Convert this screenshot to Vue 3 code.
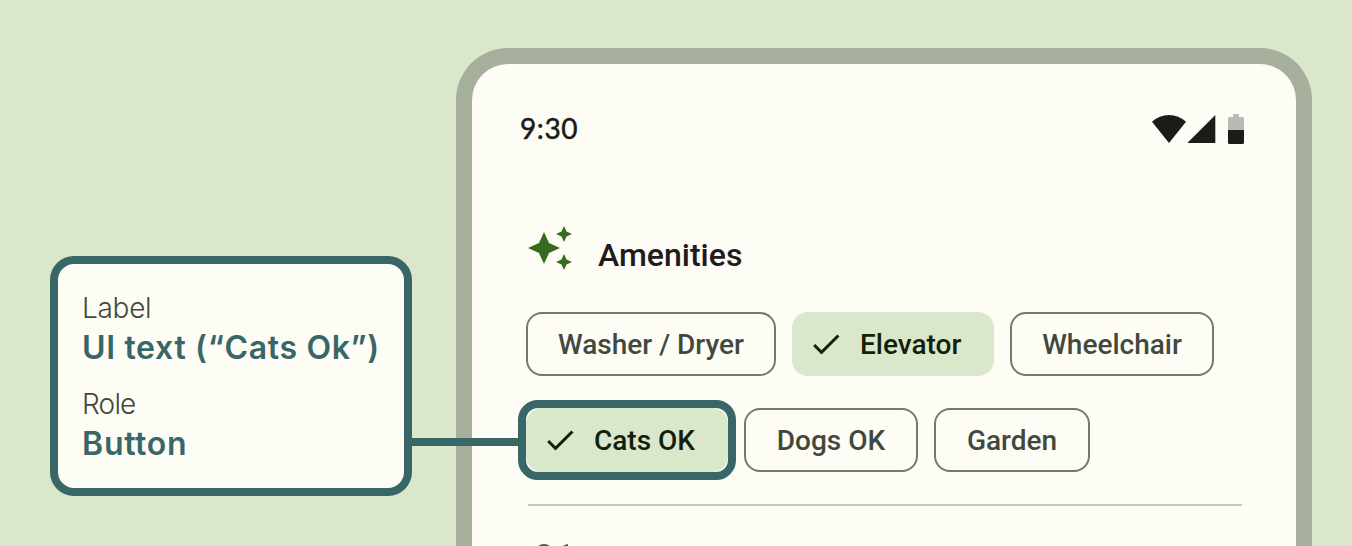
<script setup>
const rows = [
  [
    { label: 'Washer / Dryer', size: 'w250' },
    { label: 'Elevator', size: 'w202', selected: true },
    { label: 'Wheelchair', size: 'w204' },
  ],
  [
    { label: 'Cats OK', size: 'w202', selected: true, focused: true },
    { label: 'Dogs OK', size: 'w174' },
    { label: 'Garden', size: 'w156' },
  ],
]
</script>

<template>
  <main class="stage">
    <aside class="note">
      <div class="key">Label</div>
      <div class="value ui-text">UI text (“Cats Ok”)</div>
      <div class="key role">Role</div>
      <div class="value button-text">Bu<span class="joined">t</span>ton</div>
      <span class="connector"></span>
    </aside>

    <section class="phone">
      <header class="status">
        <span class="time">9:30</span>
        <svg class="status-icons" width="92" height="30" viewBox="0 0 92 30">
          <path d="M0 7.800A24.500 24.500 0 0 1 34 7.800L17 29Z" fill="#1a1c18" />
          <path d="M35.300 29H63.300V1Z" fill="#1a1c18" />
          <path d="M81 0h6v3h3.400a1.600 1.600 0 0 1 1.600 1.600V16H76V4.600A1.600 1.600 0 0 1 77.600 3H81Z" fill="#b8bab3" />
          <path d="M76 16h16v12.400a1.600 1.600 0 0 1-1.600 1.600H77.600a1.600 1.600 0 0 1-1.600-1.600Z" fill="#1a1c18" />
        </svg>
      </header>

      <div class="heading">
        <svg width="48" height="48" viewBox="0 0 24 24" fill="#386a20">
          <path d="m19 9 1.250-2.750L23 5l-2.750-1.250L19 1l-1.250 2.750L15 5l2.750 1.250zm0 6-1.250 2.750L15 19l2.750 1.250L19 23l1.250-2.750L23 19l-2.750-1.250zm-7.500-5.500L9 4 6.500 9.500 1 12l5.500 2.500L9 20l2.500-5.500L17 12z" />
        </svg>
        <h1>Amenities</h1>
      </div>

      <div class="chips">
        <div v-for="(row, i) in rows" :key="i" class="row">
          <div
            v-for="chip in row"
            :key="chip.label"
            class="chip"
            :class="[chip.size, { selected: chip.selected, focused: chip.focused }]"
          >
            <svg v-if="chip.selected" width="36" height="36" viewBox="0 0 24 24">
              <path d="M9 16.170 4.830 12l-1.420 1.410L9 19 21 7l-1.410-1.410z" fill="#131f0d" />
            </svg>
            <span class="chip-label">{{ chip.label }}</span>
          </div>
        </div>
      </div>

      <div class="divider"></div>
      <svg class="next-icon" width="48" height="48" viewBox="0 0 48 48" fill="#386a20">
        <circle cx="18" cy="9" r="9" />
        <path d="M32 9q3-8 10-9v18H32Z" />
      </svg>
    </section>
  </main>
</template>

<style>
body {
  margin: 0;
  overflow: hidden;
}
</style>

<style scoped>
.stage {
  display: flex;
  gap: 44px;
  box-sizing: border-box;
  width: 1352px;
  height: 546px;
  padding-left: 50px;
  overflow: hidden;
  background: #dae7cb;
}

.note {
  position: relative;
  flex: none;
  box-sizing: border-box;
  width: 362px;
  height: 240px;
  margin-top: 256px;
  padding: 26px 24px;
  border: 8px solid #396667;
  border-radius: 24px;
  background: #fdfdf5;
  font-family: Inter, "Open Sans", sans-serif;
  white-space: nowrap;
}

.key {
  color: #43483e;
  font-size: 28px;
  font-weight: 350;
  line-height: 36px;
  letter-spacing: -0.3px;
}

.role {
  margin-top: 16px;
  letter-spacing: -0.8px;
}

.value {
  height: 44px;
  color: #396667;
  font-size: 32px;
  font-weight: 600;
  line-height: 44px;
}

.ui-text {
  letter-spacing: 0.66px;
}

.button-text {
  letter-spacing: 0.8px;
}

.joined {
  letter-spacing: -0.6px;
}

.connector {
  position: absolute;
  z-index: 2;
  left: 354px;
  top: 174px;
  width: 108px;
  height: 8px;
  background: #396667;
}

.phone {
  flex: none;
  box-sizing: border-box;
  width: 856px;
  height: 620px;
  margin-top: 48px;
  border: 16px solid #a5af9b;
  border-bottom: 0;
  border-radius: 52px 52px 0 0;
  background: #fdfdf5;
  font-family: Roboto, sans-serif;
}

.status {
  display: flex;
  align-items: center;
  justify-content: space-between;
  height: 30px;
  padding: 50px 52px 0 48px;
}

.time {
  padding-bottom: 3px;
  color: #1a1c18;
  font-family: Lato, sans-serif;
  font-size: 28px;
  line-height: 30px;
  letter-spacing: 0.6px;
  -webkit-text-stroke: 0.5px #1a1c18;
}

.heading {
  display: flex;
  gap: 24px;
  height: 48px;
  margin: 80px 0 0 54px;
}

.heading h1 {
  margin: 12px 0 0;
  color: #231a1a;
  font-size: 32px;
  font-weight: 500;
  line-height: 38px;
}

.chips {
  display: grid;
  gap: 32px;
  margin: 40px 0 0 54px;
}

.row {
  display: flex;
  gap: 16px;
}

.chip {
  position: relative;
  display: flex;
  align-items: center;
  justify-content: center;
  box-sizing: border-box;
  height: 64px;
  border: 2px solid #73796d;
  border-radius: 16px;
  color: #43483e;
  font-size: 28px;
  font-weight: 500;
  line-height: 40px;
  white-space: nowrap;
}

.chip-label {
  padding-top: 2px;
}

.selected {
  justify-content: flex-start;
  gap: 16px;
  padding-left: 16px;
  border: 0;
  background: #dae7cb;
  color: #131f0d;
}

.focused::after {
  content: "";
  position: absolute;
  inset: -8px;
  border: 8px solid #396667;
  border-radius: 20px;
}

.w250 { width: 250px; }
.w204 { width: 204px; }
.w202 { width: 202px; }
.w174 { width: 174px; }
.w156 { width: 156px; }

.divider {
  width: 714px;
  height: 2px;
  margin: 32px 0 0 56px;
  background: #c3c8bb;
}

.next-icon {
  display: block;
  margin: 38px 0 0 54px;
}
</style>
